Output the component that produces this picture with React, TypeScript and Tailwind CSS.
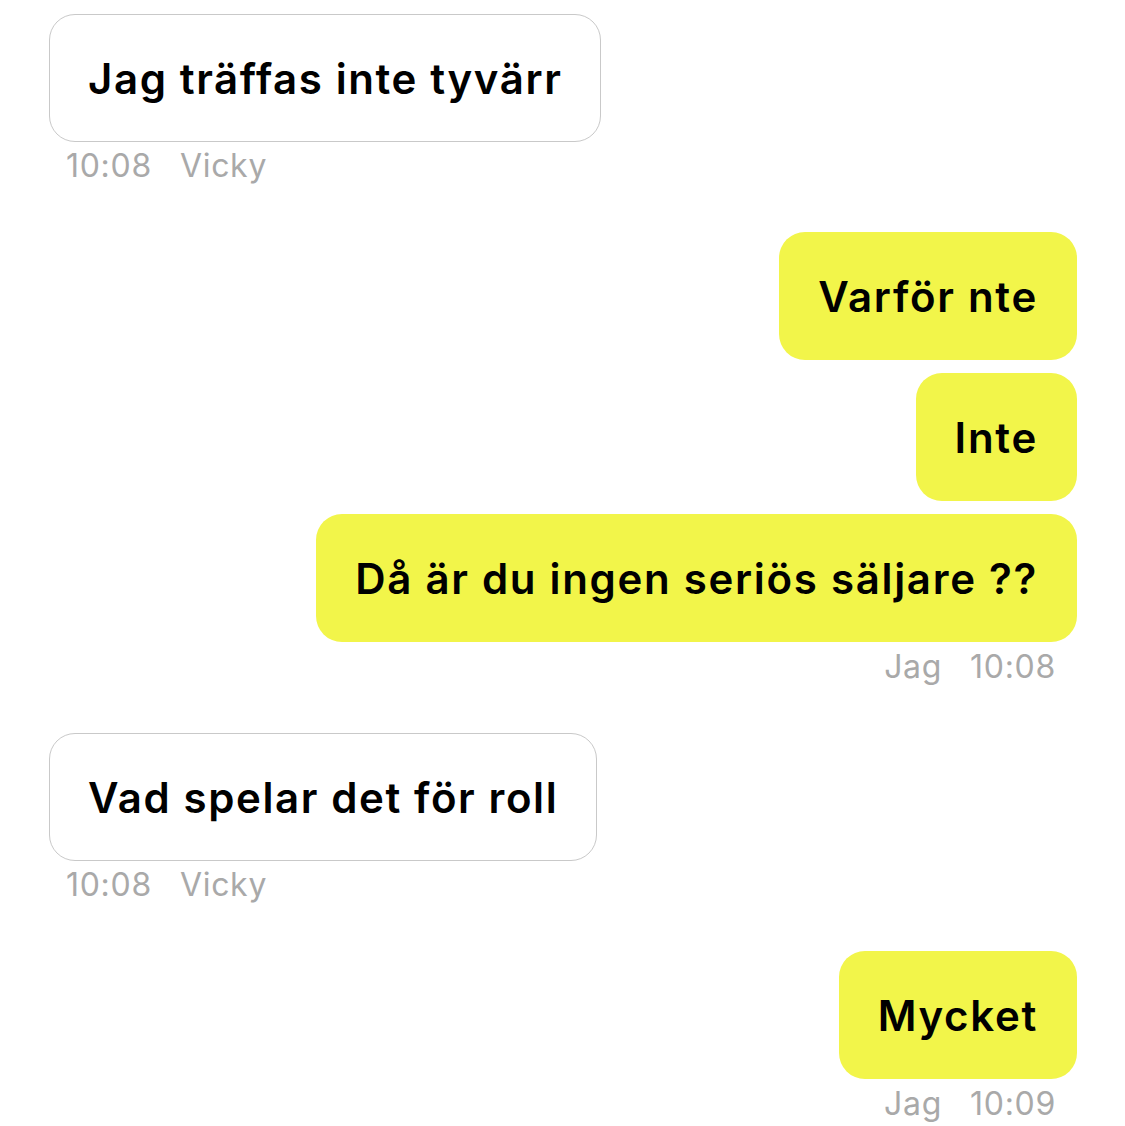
import React from "react";

const font = { fontFamily: "Inter, 'Noto Sans', sans-serif" };

function In({ text, time, who }: { text: string; time: string; who: string }) {
  return (
    <div className="flex flex-col items-start">
      <div className="h-[128px] flex items-center px-[38px] rounded-[26px] border-[1.5px] border-[#c9c9c9] bg-white text-[42px] font-semibold text-black tracking-[1.6px]">
        {text}
      </div>
      <div className="mt-[4px] h-[40px] flex items-center gap-[28px] pl-[17px] text-[32px] text-[#a9a9a9] leading-none tracking-[0.7px]">
        <span>{time}</span>
        <span>{who}</span>
      </div>
    </div>
  );
}

function Out({ texts, time }: { texts: string[]; time: string }) {
  return (
    <div className="flex flex-col items-end">
      <div className="flex flex-col items-end gap-[13px]">
        {texts.map((t, i) => (
          <div
            key={i}
            className="h-[128px] flex items-center px-[39px] rounded-[26px] bg-[#f2f54a] text-[42px] font-semibold text-black tracking-[1.7px]"
          >
            {t}
          </div>
        ))}
      </div>
      <div className="mt-[5px] h-[40px] flex items-center gap-[28px] pr-[21px] text-[32px] text-[#a9a9a9] leading-none tracking-[0.7px]">
        <span>Jag</span>
        <span>{time}</span>
      </div>
    </div>
  );
}

export default function App() {
  return (
    <div className="w-[1125px] h-[1126px] bg-white overflow-hidden" style={font}>
      <div className="flex flex-col pl-[49px] pr-[48px] pt-[14px] gap-[46px]">
        <In text="Jag träffas inte tyvärr" time="10:08" who="Vicky" />
        <Out texts={["Varför nte", "Inte", "Då är du ingen seriös säljare ??"]} time="10:08" />
        <In text="Vad spelar det för roll" time="10:08" who="Vicky" />
        <Out texts={["Mycket"]} time="10:09" />
      </div>
    </div>
  );
}
